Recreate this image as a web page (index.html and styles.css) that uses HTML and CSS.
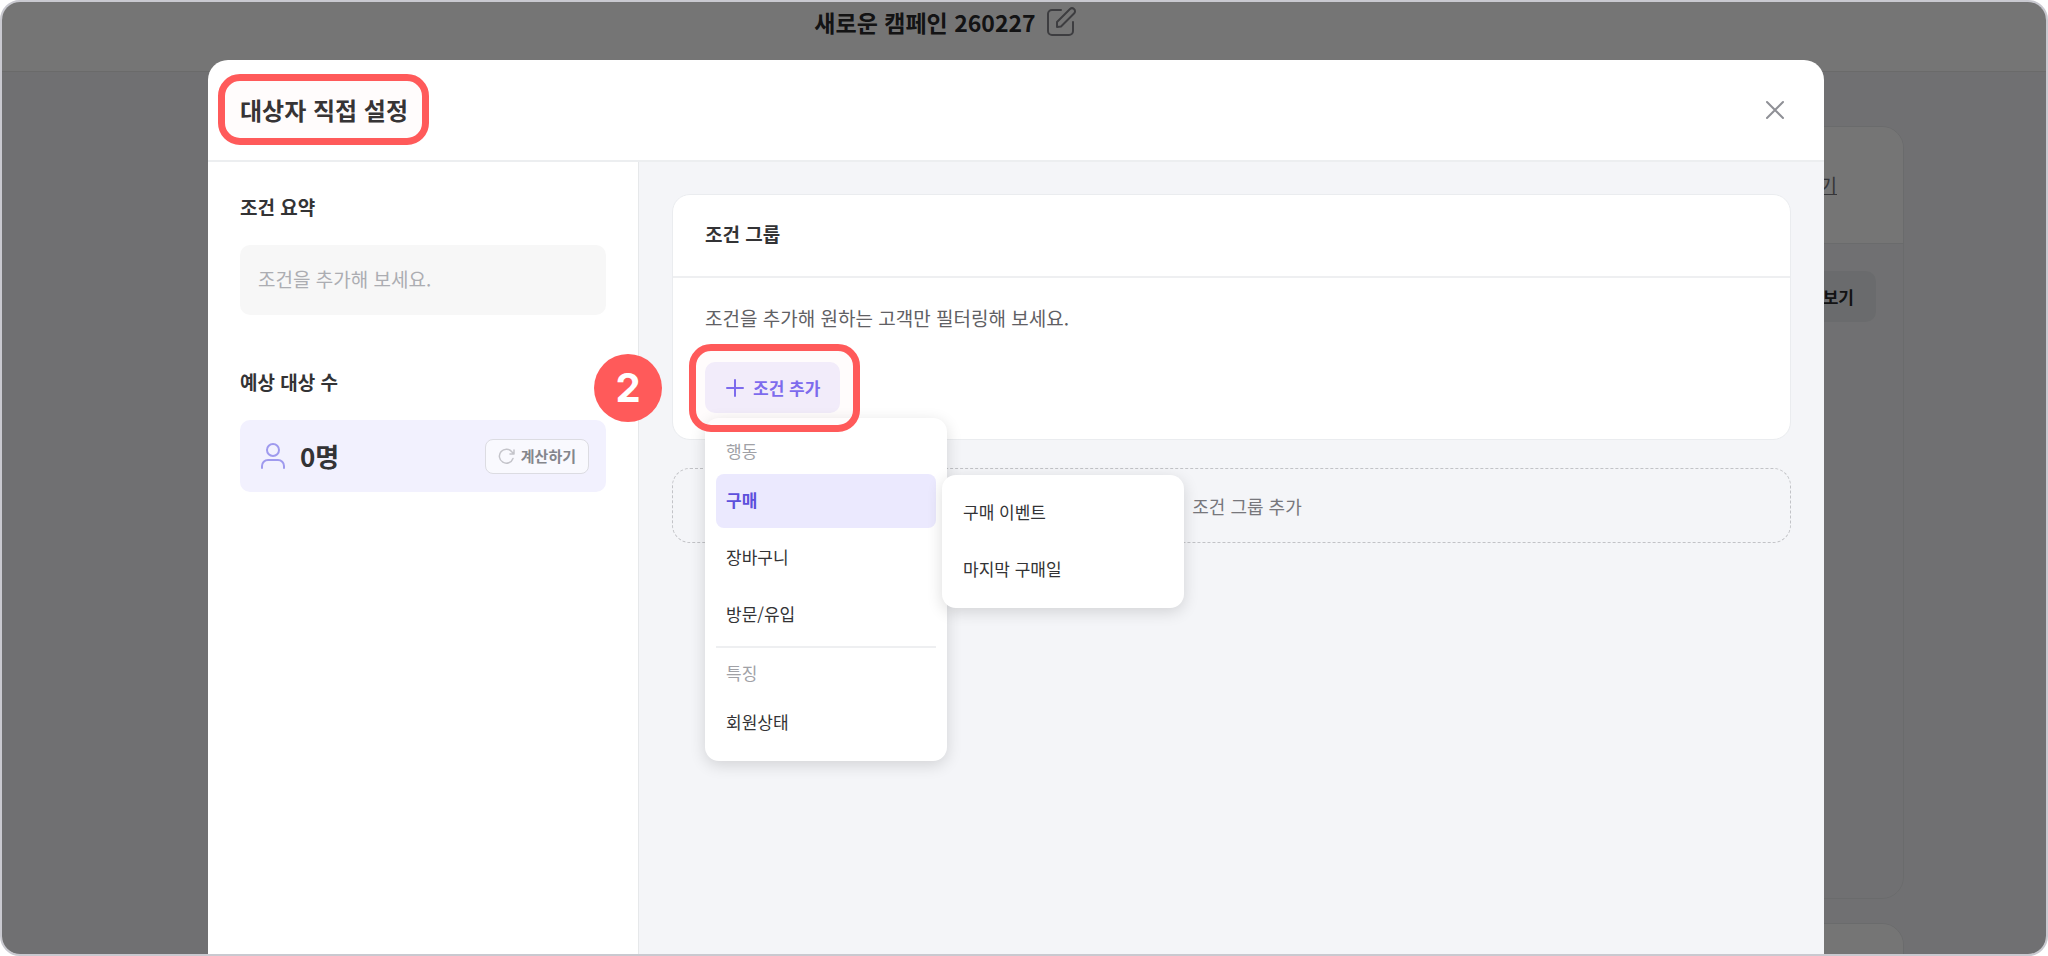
FILE: index.html
```html
<!DOCTYPE html>
<html lang="ko">
<head>
  <meta charset="UTF-8" />
  <title>대상자 직접 설정</title>
  <link rel="stylesheet" href="styles.css">
</head>
<body>

<div class="frame">

  <!-- CAMPAIGN PAGE -->
  <header class="page-header">
    <h1>새로운 캠페인 260227</h1>
    <button class="icon-btn" aria-label="이름 수정">
      <svg width="32" height="32" viewBox="0 0 32 32" fill="none" stroke="#85858b" stroke-width="2" stroke-linecap="round" stroke-linejoin="round">
        <path d="M15 4H6a4 4 0 0 0-4 4v17a4 4 0 0 0 4 4h17a4 4 0 0 0 4-4v-9"/>
        <path d="M11 21v-5L24 3a3 3 0 0 1 4 0a3 3 0 0 1 0 4.500L15 20.500z"/>
      </svg>
    </button>
  </header>
  <main class="page-body">
    <section class="page-card">
      <div class="page-card-head"><a href="#">보기</a></div>
      <div class="page-card-body"><button class="preview-btn">보기</button></div>
    </section>
    <section class="page-card">
      <div class="page-card-head"></div>
    </section>
  </main>

  <!-- MODAL -->
  <div class="overlay">
    <div class="modal" role="dialog" aria-labelledby="modal-title">
      <div class="modal-header">
        <h2 id="modal-title">대상자 직접 설정<span class="ring ring-title"></span></h2>
        <button class="icon-btn" aria-label="닫기">
          <svg width="34" height="34" viewBox="0 0 34 34" stroke="#8f9096" stroke-width="2" stroke-linecap="round">
            <path d="M9 9l16 16M25 9L9 25"/>
          </svg>
        </button>
      </div>

      <div class="modal-body">
        <aside class="sidebar">
          <h3>조건 요약</h3>
          <div class="summary">조건을 추가해 보세요.</div>

          <h3>예상 대상 수</h3>
          <div class="estimate">
            <svg width="26" height="28" viewBox="0 0 26 28" fill="none" stroke="#9f9aee" stroke-width="2" stroke-linecap="round">
              <circle cx="13" cy="8" r="6"/>
              <path d="M2 26v-2a6 6 0 0 1 6-6h10a6 6 0 0 1 6 6v2"/>
            </svg>
            <strong>0명</strong>
            <button class="calc-btn">
              <svg width="17" height="17" viewBox="0 0 17 17" fill="none" stroke="#c4c4ca" stroke-width="1.5" stroke-linecap="round" stroke-linejoin="round">
                <path d="M15 10.500a7 7 0 1 1-1-6.500l2 2M16 2v4h-4"/>
              </svg>
              계산하기
            </button>
          </div>
        </aside>

        <section class="content">
          <div class="group">
            <h3 class="group-head">조건 그룹</h3>
            <div class="group-body">
              <p>조건을 추가해 원하는 고객만 필터링해 보세요.</p>
              <div class="add">
                <button class="add-btn">
                  <svg width="20" height="20" viewBox="0 0 20 20" stroke="#7b6cf0" stroke-width="2" stroke-linecap="round">
                    <path d="M10 2v16M2 10h16"/>
                  </svg>
                  조건 추가
                </button>

                <div class="menu menu-main">
                  <div class="menu-label">행동</div>
                  <button class="menu-item active">구매</button>
                  <button class="menu-item">장바구니</button>
                  <button class="menu-item">방문/유입</button>
                  <hr>
                  <div class="menu-label">특징</div>
                  <button class="menu-item">회원상태</button>
                </div>
                <div class="menu menu-sub">
                  <button class="menu-item">구매 이벤트</button>
                  <button class="menu-item">마지막 구매일</button>
                </div>

                <span class="ring ring-add"></span>
                <span class="step">2</span>
              </div>
            </div>
          </div>

          <button class="add-group">
            <svg width="22" height="22" viewBox="0 0 22 22" stroke="#77777c" stroke-width="1" stroke-linecap="round">
              <path d="M11 1v20M1 11h20"/>
            </svg>
            조건 그룹 추가
          </button>
        </section>
      </div>
    </div>
  </div>

</div>

</body>
</html>
```
FILE: styles.css
```css
* {
  box-sizing: border-box;
}

body {
  margin: 0;
  background: #fff;
  color: #333335;
  font-family: "Noto Sans CJK KR", sans-serif;
  font-size: 19px;
  line-height: 28px;
}

h1, h2, h3, p {
  margin: 0;
}

button {
  padding: 0;
  border: none;
  background: none;
  color: inherit;
  font: inherit;
  cursor: pointer;
}

svg {
  display: block;
  flex: none;
}

.icon-btn {
  display: flex;
}

.frame {
  position: relative;
  display: flex;
  flex-direction: column;
  height: 100vh;
  border: 2px solid #c9c9d0;
  border-radius: 20px;
  overflow: hidden;
}

/* campaign page */
.page-header {
  display: flex;
  flex: none;
  align-items: center;
  justify-content: center;
  gap: 10px;
  height: 70px;
  padding: 0 156px 30px 0;
  border-bottom: 1px solid #e6e6e8;
}

.page-header h1 {
  color: #2a2a2c;
  font-size: 23px;
  font-weight: 700;
}

.page-body {
  display: flex;
  flex: 1;
  flex-direction: column;
  gap: 24px;
  padding: 54px 142px 0 240px;
  background: #f4f5f8;
}

.page-card {
  flex: none;
  border: 1px solid #e8e9ec;
  border-radius: 22px;
  overflow: hidden;
}

.page-card-head {
  display: flex;
  align-items: center;
  justify-content: flex-end;
  height: 117px;
  padding-right: 66px;
  border-bottom: 1px solid #e8e9ec;
  background: #fff;
}

.page-card-head a {
  color: #77777c;
}

.page-card-body {
  display: flex;
  align-items: flex-start;
  justify-content: flex-end;
  height: 654px;
  padding: 27px;
}

.preview-btn {
  height: 51px;
  padding: 0 22px;
  border-radius: 10px;
  background: #e8eaed;
  color: #2a2a2c;
  font-size: 17px;
  font-weight: 700;
}

/* modal */
.overlay {
  position: absolute;
  inset: 0;
  display: flex;
  padding: 58px 222px 0 206px;
  background: rgba(0, 0, 0, 0.54);
}

.modal {
  display: flex;
  flex: 1;
  flex-direction: column;
  border-radius: 20px 20px 0 0;
  background: #fff;
}

.modal-header {
  display: flex;
  flex: none;
  align-items: center;
  justify-content: space-between;
  height: 102px;
  padding: 0 32px;
  border-bottom: 2px solid #eceef0;
}

.modal-header h2 {
  position: relative;
  font-size: 24px;
  font-weight: 700;
  line-height: 36px;
}

.modal-body {
  display: flex;
  flex: 1;
}

.sidebar {
  flex: none;
  width: 431px;
  padding: 31px 32px;
  border-right: 1px solid #e6e8ea;
}

h3 {
  font-size: 19px;
  font-weight: 700;
  line-height: 28px;
}

.summary {
  margin: 24px 0 53px;
  padding: 19px 18px 21px;
  border-radius: 10px;
  background: #f7f7f7;
  color: #acadb2;
  line-height: 30px;
}

.estimate {
  display: flex;
  align-items: center;
  gap: 14px;
  height: 72px;
  margin-top: 24px;
  padding: 0 17px 0 20px;
  border-radius: 10px;
  background: #f2f1fe;
}

.estimate strong {
  font-size: 26px;
}

.calc-btn {
  display: flex;
  align-items: center;
  gap: 6px;
  height: 35px;
  margin-left: auto;
  padding: 0 12px;
  border: 1px solid #dcdce2;
  border-radius: 8px;
  background: #f9f9fe;
  color: #85868c;
  font-size: 15px;
  font-weight: 700;
}

.content {
  flex: 1;
  padding: 32px 33px;
  background: #f4f5f8;
}

.group {
  border: 1px solid #eaecef;
  border-radius: 18px;
  background: #fff;
}

.group-head {
  padding: 25px 32px 28px;
  border-bottom: 2px solid #eeeff1;
}

.group-body {
  padding: 26px 32px;
}

.group-body p {
  color: #5f6064;
}

.add {
  position: relative;
  display: flex;
  padding-top: 30px;
}

.add-btn {
  display: flex;
  align-items: center;
  gap: 8px;
  height: 51px;
  padding: 0 20px;
  border-radius: 10px;
  background: #f2effd;
  color: #7b6cf0;
  font-size: 17px;
  font-weight: 700;
}

.add-group {
  display: flex;
  align-items: center;
  justify-content: center;
  gap: 9px;
  width: 100%;
  height: 75px;
  margin-top: 28px;
  border: 1px dashed #c2c3c7;
  border-radius: 18px;
  color: #77777c;
  font-size: 18px;
}

/* dropdown menus */
.menu {
  position: absolute;
  display: flex;
  flex-direction: column;
  gap: 3px;
  width: 242px;
  padding: 11px;
  border-radius: 14px;
  background: #fff;
  box-shadow: 0 4px 16px rgba(0, 0, 0, 0.14);
  font-size: 17px;
}

.menu-main {
  top: 86px;
  left: 0;
}

.menu-sub {
  top: 143px;
  left: 237px;
}

.menu-item {
  height: 54px;
  padding: 0 10px 2px;
  border-radius: 8px;
  text-align: left;
}

.menu-item.active {
  background: #ebe9fe;
  color: #5d50dc;
  font-weight: 700;
}

.menu-label {
  padding: 8px 10px 6px;
  color: #a0a1a6;
}

.menu hr {
  width: 100%;
  margin: 1px 0 0;
  border: none;
  border-top: 2px solid #eeeff1;
}

/* red step marks */
.ring {
  position: absolute;
  border: 7px solid #ff5a5a;
  border-radius: 22px;
  background: rgba(255, 90, 90, 0.02);
  pointer-events: none;
}

.ring-title {
  inset: -18px -21px -17px -22px;
}

.ring-add {
  top: 12px;
  left: -16px;
  width: 171px;
  height: 88px;
}

.step {
  position: absolute;
  top: 22px;
  left: -111px;
  width: 68px;
  border-radius: 50%;
  background: #ff5a5a;
  color: #fff;
  font-family: Inter, sans-serif;
  font-size: 40px;
  font-weight: 700;
  line-height: 68px;
  text-align: center;
}
```
